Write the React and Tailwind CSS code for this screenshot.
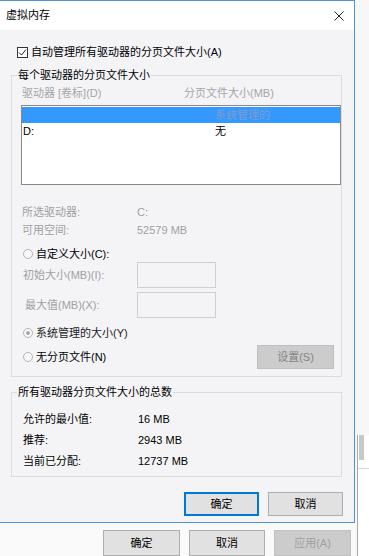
import React from 'react';

const font = { fontFamily: '"Liberation Sans", "Noto Sans CJK SC", sans-serif' };

function Radio({ checked }) {
  return (
    <span className="w-[10px] h-[10px] rounded-full border border-[#b4b4b4] bg-[#f8f8fa] flex items-center justify-center shrink-0">
      {checked && <span className="w-[4px] h-[4px] rounded-full bg-[#a8a8a8]" />}
    </span>
  );
}

function WinButton({ children, primary, disabled, className = '' }) {
  return (
    <div
      className={`h-[24px] flex items-center justify-center text-[11px] ${
        disabled
          ? 'bg-[#cccccc] border border-[#bfbfbf] text-[#838383]'
          : primary
          ? 'bg-[#e1e1e1] border-2 border-[#0078d7] text-black'
          : 'bg-[#e1e1e1] border border-[#adadad] text-black'
      } ${className}`}
    >
      {children}
    </div>
  );
}

export default function App() {
  return (
    <div className="w-[369px] h-[556px] overflow-hidden flex bg-white" style={font}>
      {/* left column: dialog + parent window strip */}
      <div className="w-[355px] flex flex-col">
        <div className="w-[355px] h-[529px] flex flex-col border-r border-b border-t border-[#4a94d8] bg-white">
          {/* title bar */}
          <div className="h-[29px] flex items-center justify-between pl-[6px] pr-[8px] bg-white">
            <span className="text-[11px] text-black">虚拟内存</span>
            <svg width="10" height="10" viewBox="0 0 10 10" className="mr-[2px]">
              <path d="M0.5 0.5 L9.5 9.5 M9.5 0.5 L0.5 9.5" stroke="#222" strokeWidth="1" />
            </svg>
          </div>

          {/* client */}
          <div className="flex-1 bg-[#f4f4f7] px-[11px] text-[11px]">
            <div className="h-[16px] mt-[14px] flex items-center pl-[6px] gap-[3px]">
              <span className="w-[11px] h-[11px] border border-[#333] bg-white flex items-center justify-center">
                <svg width="9" height="9" viewBox="0 0 9 9">
                  <path d="M1 4.5 L3.5 7 L8 1.5" stroke="#222" strokeWidth="1" fill="none" />
                </svg>
              </span>
              <span className="text-black">自动管理所有驱动器的分页文件大小(A)</span>
            </div>

            {/* per drive group */}
            <fieldset className="mt-[7px] w-[331px] border border-[#dcdcdc] min-w-0 pb-[7px]">
              <legend className="ml-[5px] px-[1px] leading-[16px] text-black">每个驱动器的分页文件大小</legend>
              <div className="h-[16px] mt-[2px] flex items-center pl-[10px] text-[#a5a5a5]">
                <span className="w-[162px]">驱动器 [卷标](D)</span>
                <span>分页文件大小(MB)</span>
              </div>
              <div className="mt-[4px] ml-[9px] w-[320px] h-[80px] border border-[#8a8a8a] bg-white pt-[1px]">
                <div className="h-[16px] bg-[#3399ff] flex items-center pl-[1px]">
                  <span className="w-[192px] text-[#3399ff]">C:</span>
                  <span className="text-[#7f9ccb]">系统管理的</span>
                </div>
                <div className="h-[16px] flex items-center pl-[1px] text-black">
                  <span className="w-[192px]">D:</span>
                  <span>无</span>
                </div>
              </div>

              <div className="mt-[18px] pl-[10px] text-[#a0a0a0]">
                <div className="h-[18px] flex items-center">
                  <span className="w-[115px]">所选驱动器:</span>
                  <span>C:</span>
                </div>
                <div className="h-[18px] flex items-center">
                  <span className="w-[115px]">可用空间:</span>
                  <span>52579 MB</span>
                </div>
              </div>

              <div className="h-[16px] mt-[7px] flex items-center pl-[11px] gap-[3px] text-black">
                <Radio />
                <span>自定义大小(C):</span>
              </div>
              <div className="h-[26px] flex items-center pl-[11px] text-[#a0a0a0]">
                <span className="w-[114px]">初始大小(MB)(I):</span>
                <div className="w-[79px] h-[26px] border border-[#cfcfcf] bg-[#f4f4f7]" />
              </div>
              <div className="h-[26px] mt-[4px] flex items-center pl-[13px] text-[#a0a0a0]">
                <span className="w-[112px]">最大值(MB)(X):</span>
                <div className="w-[79px] h-[26px] border border-[#cfcfcf] bg-[#f4f4f7]" />
              </div>
              <div className="h-[16px] mt-[7px] flex items-center pl-[11px] gap-[3px] text-[#222]">
                <Radio checked />
                <span>系统管理的大小(Y)</span>
              </div>
              <div className="h-[24px] mt-[4px] flex items-center pl-[11px] text-black">
                <div className="w-[234px] flex items-center gap-[3px]">
                  <Radio />
                  <span>无分页文件(N)</span>
                </div>
                <WinButton disabled className="w-[77px]">设置(S)</WinButton>
              </div>
            </fieldset>

            {/* totals group */}
            <fieldset className="mt-[7px] w-[331px] border border-[#dcdcdc] min-w-0 pb-[4px]">
              <legend className="ml-[5px] px-[1px] leading-[16px] text-black">所有驱动器分页文件大小的总数</legend>
              <div className="pt-[9px] pl-[11px] text-black">
                <div className="h-[21px] flex items-center">
                  <span className="w-[115px]">允许的最小值:</span>
                  <span>16 MB</span>
                </div>
                <div className="h-[21px] flex items-center">
                  <span className="w-[115px]">推荐:</span>
                  <span>2943 MB</span>
                </div>
                <div className="h-[21px] flex items-center">
                  <span className="w-[115px]">当前已分配:</span>
                  <span>12737 MB</span>
                </div>
              </div>
            </fieldset>

            <div className="mt-[15px] flex gap-[9px] ml-[173px]">
              <WinButton primary className="w-[76px]">确定</WinButton>
              <WinButton className="w-[76px]">取消</WinButton>
            </div>
          </div>
        </div>

        {/* parent window bottom */}
        <div className="flex-1 bg-[#fafafa] pt-[7px] pl-[103px] flex gap-[9px] text-[11px]">
          <WinButton className="w-[77px] h-[26px]">确定</WinButton>
          <WinButton className="w-[76px] h-[26px]">取消</WinButton>
          <WinButton disabled className="w-[77px] h-[26px] text-[#a0a0a0]">应用(A)</WinButton>
        </div>
      </div>

      {/* window behind, on the right */}
      <div className="flex-1 pl-[2px] bg-[#f7f7f7]">
        <div className="h-full border-l border-[#a8a8a8] bg-white">
          <div className="mt-[435px] ml-[1px] w-[5px] h-[25px] bg-[#c8c8c8]" />
          <div className="mt-[8px] h-px bg-[#d8d8d8]" />
        </div>
      </div>
    </div>
  );
}
